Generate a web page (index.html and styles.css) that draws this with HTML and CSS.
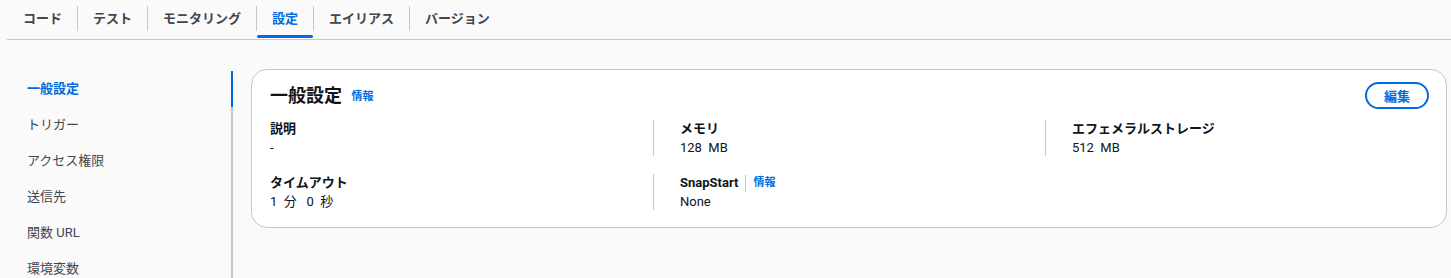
FILE: index.html
```html
<!DOCTYPE html>
<html lang="ja">
<head>
    <meta charset="UTF-8">
    <meta name="viewport" content="width=device-width, initial-scale=1.0">
    <title>関数の設定</title>
    <link rel="stylesheet" href="styles.css">
</head>
<body>
    <div class="tabs">
        <div class="tab">コード</div>
        <div class="tab">テスト</div>
        <div class="tab">モニタリング</div>
        <div class="tab active">設定</div>
        <div class="tab">エイリアス</div>
        <div class="tab">バージョン</div>
    </div>

    <div class="content">
        <ul class="side-nav">
            <li class="active">一般設定</li>
            <li>トリガー</li>
            <li>アクセス権限</li>
            <li>送信先</li>
            <li>関数 URL</li>
            <li>環境変数</li>
        </ul>

        <div class="card">
            <div class="card-header">
                <h2>一般設定 <a class="info" href="#">情報</a></h2>
                <button class="edit">編集</button>
            </div>
            <div class="columns">
                <div class="item">
                    <div class="label">説明</div>
                    <div class="value">-</div>
                </div>
                <div class="item bordered">
                    <div class="label">メモリ</div>
                    <div class="value">128&nbsp; MB</div>
                </div>
                <div class="item bordered">
                    <div class="label">エフェメラルストレージ</div>
                    <div class="value">512&nbsp; MB</div>
                </div>
                <div class="item">
                    <div class="label">タイムアウト</div>
                    <div class="value">1&nbsp; 分&nbsp; &nbsp;0&nbsp; 秒</div>
                </div>
                <div class="item bordered">
                    <div class="label">SnapStart <span class="divider"></span><a class="info" href="#">情報</a></div>
                    <div class="value">None</div>
                </div>
            </div>
        </div>
    </div>
</body>
</html>
```

FILE: styles.css
```css
body {
    font-family: Roboto, "Noto Sans CJK JP", sans-serif;
    font-size: 13px;
    color: #0f141a;
    background: #fafafa;
    margin: 0;
    height: 278px;
    overflow: hidden;
}

/* Tabs */
.tabs {
    display: flex;
    margin-left: 7px;
    height: 39px;
    border-bottom: 1px solid #c6c6cd;
}
.tab {
    position: relative;
    display: flex;
    align-items: center;
    height: 35px;
    padding: 0 15px 0 16px;
    font-weight: 700;
    color: #424650;
}
.tab + .tab::before {
    content: "";
    position: absolute;
    left: 0;
    top: 6px;
    width: 1px;
    height: 25px;
    background: #c6c6cd;
}
.tab.active {
    color: #006ce0;
}
.tab.active::after {
    content: "";
    position: absolute;
    left: 1px;
    right: 0;
    bottom: -3px;
    height: 3px;
    border-radius: 2px;
    background: #006ce0;
}

/* Layout */
.content {
    display: flex;
    padding-top: 29px;
}

/* Side navigation */
.side-nav {
    list-style: none;
    margin: 2px 0 0;
    padding: 0;
    width: 231px;
    border-right: 2px solid #c6c6cd;
    flex-shrink: 0;
}
.side-nav li {
    height: 36px;
    line-height: 36px;
    padding-left: 27px;
    color: #424650;
    margin-right: -2px;
    border-right: 2px solid transparent;
}
.side-nav li.active {
    color: #006ce0;
    font-weight: 700;
    border-right-color: #006ce0;
}

/* Card */
.card {
    flex: 1;
    margin: 0 4px 0 18px;
    height: 159px;
    box-sizing: border-box;
    background: #ffffff;
    border: 1px solid #c6c6cd;
    border-radius: 16px;
    padding: 12px 17px 18px 18px;
}
.card-header {
    display: flex;
    justify-content: space-between;
    align-items: flex-start;
}
.card-header h2 {
    margin: 3px 0 0;
    font-size: 18px;
    line-height: 22px;
    font-weight: 700;
}
.info {
    color: #006ce0;
    font-size: 11px;
    font-weight: 700;
    text-decoration: none;
    margin-left: 5px;
    vertical-align: 2px;
}
.edit {
    width: 64px;
    height: 27px;
    border: 2px solid #006ce0;
    border-radius: 20px;
    background: #ffffff;
    color: #006ce0;
    font-family: inherit;
    font-size: 13px;
    font-weight: 700;
    padding: 0;
    cursor: pointer;
}

.columns {
    display: grid;
    grid-template-columns: 383px 392px 1fr;
    row-gap: 18px;
    margin-top: 11px;
}
.item {
    height: 36px;
}
.item.bordered {
    border-left: 1px solid #c6c6cd;
    padding-left: 26px;
}
.label {
    font-weight: 700;
    line-height: 18px;
    display: flex;
    align-items: center;
}
.label .info {
    margin-left: 0;
    vertical-align: 0;
}
.divider {
    display: inline-block;
    width: 1px;
    height: 17px;
    background: #c6c6cd;
    margin: 0 7px;
}
.value {
    line-height: 20px;
}
```
